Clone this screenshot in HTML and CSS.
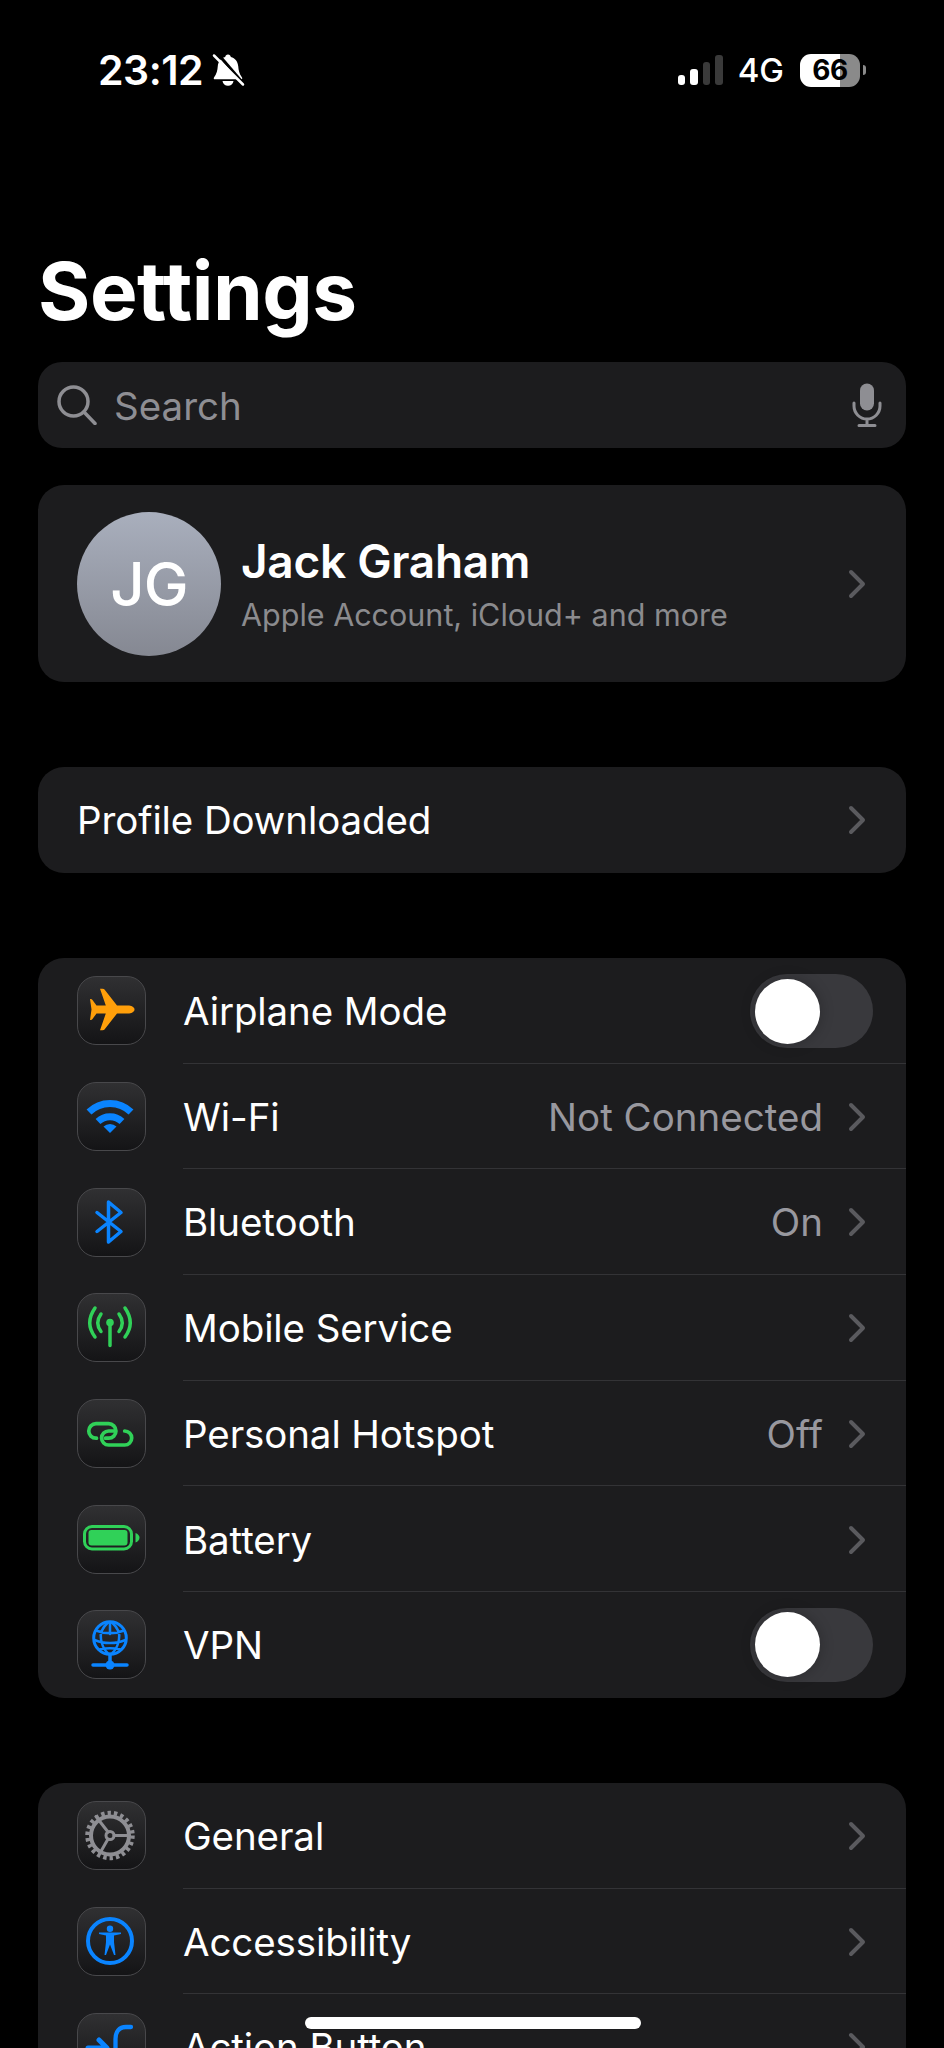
FILE: index.html
```html
<!DOCTYPE html>
<html lang="en">
<head>
<meta charset="utf-8">
<title>Settings</title>
<link rel="stylesheet" href="styles.css">
</head>
<body>
<div class="screen">
  <header class="status">
    <div class="status-left">
      <span class="time">23:12</span>
      <svg class="bell" viewBox="0 0 34 34">
        <path class="bell-fill" d="M17 1.5c1.6 0 2.6 1 2.8 2.4 4.4 1 7 4.600 7.400 9.100.4 4.500 1 7.500 3.800 11.500.6 1 .2 1.800-1 1.800H4c-1.200 0-1.600-.8-1-1.800 2.800-4 3.400-7 3.800-11.500.4-4.500 3-8.100 7.400-9.100.2-1.400 1.200-2.400 2.800-2.400z"/>
        <path class="bell-fill" d="M11.500 28h11c-.4 3-2.600 4.800-5.500 4.800s-5.100-1.800-5.500-4.800z"/>
        <path class="bell-gap" d="M7 1l24 28"/>
        <path class="bell-slash" d="M3 2.500l29 29"/>
      </svg>
    </div>
    <div class="status-right">
      <div class="signal">
        <i class="bar bar-1"></i><i class="bar bar-2"></i><i class="bar bar-3"></i><i class="bar bar-4"></i>
      </div>
      <span class="net">4G</span>
      <div class="battery"><span class="battery-level">66</span></div>
      <i class="battery-cap"></i>
    </div>
  </header>

  <main class="content">
    <h1 class="title">Settings</h1>

    <div class="search">
      <svg class="search-icon" viewBox="0 0 40 40">
        <circle cx="16.500" cy="16.500" r="14.500"/>
        <path d="M27 27l11 11.500"/>
      </svg>
      <span class="search-text">Search</span>
      <svg class="mic-icon" viewBox="0 0 30 44">
        <rect class="mic-body" x="8" y="0.500" width="14" height="27" rx="7"/>
        <path class="mic-line" d="M2 20v3a13 13 0 0 0 26 0v-3M15 36v6M7 42.500h16"/>
      </svg>
    </div>

    <section class="card profile">
      <div class="avatar">JG</div>
      <div class="profile-text">
        <div class="name">Jack Graham</div>
        <div class="sub">Apple Account, iCloud+ and more</div>
      </div>
      <svg class="chev" viewBox="0 0 18 30"><path d="M3 3l12 12L3 27"/></svg>
    </section>

    <section class="card plain-row">
      <span class="label">Profile Downloaded</span>
      <svg class="chev" viewBox="0 0 18 30"><path d="M3 3l12 12L3 27"/></svg>
    </section>

    <section class="card">
      <div class="row">
        <div class="icon">
          <svg viewBox="0 0 69 69"><path class="f-orange" d="M58.500 33.500C58.500 36 55 37.500 52 37.500H41L28.500 53.500Q28 54.200 26.500 54.200H24L29.800 37.500H20.500L16.500 43Q16 44 14.500 44H14L15.500 33.500 14 23H14.500Q16 23 16.500 24L20.500 29.500H29.800L24 12.800H26.500Q28 12.800 28.500 13.500L41 29.500H52C55 29.500 58.500 31 58.500 33.500Z"/></svg>
        </div>
        <div class="row-body">
          <span class="label">Airplane Mode</span>
          <div class="toggle"><i class="knob"></i></div>
        </div>
      </div>
      <div class="row">
        <div class="icon">
          <svg viewBox="0 0 69 69">
            <path class="s-blue s-wifi" d="M13 30A30 30 0 0 1 55 30"/>
            <path class="s-blue s-wifi" d="M22 39.500A17.500 17.500 0 0 1 46 39.500"/>
            <path class="f-blue j-round" d="M34 51L27.500 44.500A9.500 9.500 0 0 1 40.500 44.500Z"/>
          </svg>
        </div>
        <div class="row-body">
          <span class="label">Wi-Fi</span>
          <span class="value">Not Connected</span>
          <svg class="chev" viewBox="0 0 18 30"><path d="M3 3l12 12L3 27"/></svg>
        </div>
      </div>
      <div class="row">
        <div class="icon">
          <svg viewBox="0 0 69 69"><path class="s-blue s-35 j-round" d="M21 25.500L45 44.500 32.500 55V15L45 25.500 21 44.500"/></svg>
        </div>
        <div class="row-body">
          <span class="label">Bluetooth</span>
          <span class="value">On</span>
          <svg class="chev" viewBox="0 0 18 30"><path d="M3 3l12 12L3 27"/></svg>
        </div>
      </div>
      <div class="row">
        <div class="icon">
          <svg viewBox="0 0 69 69">
            <path class="s-green s-35" d="M19 15Q8.500 30 19 44M25 21Q18.500 30 25 38.500M43 21Q49.500 30 43 38.500M49 15Q59.500 30 49 44M34 30V52.500"/>
            <circle class="f-green" cx="34" cy="29.500" r="3.800"/>
          </svg>
        </div>
        <div class="row-body">
          <span class="label">Mobile Service</span>
          <svg class="chev" viewBox="0 0 18 30"><path d="M3 3l12 12L3 27"/></svg>
        </div>
      </div>
      <div class="row">
        <div class="icon">
          <svg viewBox="0 0 69 69">
            <path class="s-green s-37" d="M20.500 39.200H20A7.250 7.250 0 0 1 20 24.700H32.700A7.250 7.250 0 0 1 32.700 39.200H29.500"/>
            <path class="s-green s-37" d="M48.700 32A7 7 0 0 1 48.700 46H32.600A7 7 0 0 1 32.600 32H38"/>
          </svg>
        </div>
        <div class="row-body">
          <span class="label">Personal Hotspot</span>
          <span class="value">Off</span>
          <svg class="chev" viewBox="0 0 18 30"><path d="M3 3l12 12L3 27"/></svg>
        </div>
      </div>
      <div class="row">
        <div class="icon">
          <svg viewBox="0 0 69 69">
            <rect class="s-green s-3" x="8.500" y="22.500" width="47" height="22.500" rx="7.500"/>
            <rect class="f-green" x="12.500" y="26" width="39" height="15.500" rx="3"/>
            <path class="f-green" d="M59.500 29c2.500 1 4 2.700 4 4.700s-1.500 3.800-4 4.800z"/>
          </svg>
        </div>
        <div class="row-body">
          <span class="label">Battery</span>
          <svg class="chev" viewBox="0 0 18 30"><path d="M3 3l12 12L3 27"/></svg>
        </div>
      </div>
      <div class="row">
        <div class="icon">
          <svg viewBox="0 0 69 69">
            <circle class="s-blue s-3" cx="34" cy="28" r="16.300"/>
            <path class="s-blue s-25" d="M32 12.500C26 18 24 24 25 29c.5 5 3 10.500 7 14.500M36 12.500C42 18 44 24 43 29c-.5 5-3 10.500-7 14.500M34 12.500V24M20 20.500c8 3.500 20 3.500 28 0M18.500 30c9 4 22 4 31 0M23.500 39.500c6-1.500 15-1.500 21 0"/>
            <path class="s-blue s-35" d="M34 44V55M17 55H51"/>
            <circle class="f-blue" cx="34" cy="55" r="4.500"/>
          </svg>
        </div>
        <div class="row-body">
          <span class="label">VPN</span>
          <div class="toggle"><i class="knob"></i></div>
        </div>
      </div>
    </section>

    <section class="card">
      <div class="row">
        <div class="icon">
          <svg viewBox="0 0 69 69">
            <circle class="s-gray s-ring" cx="34" cy="34.500" r="19"/>
            <circle class="s-gray s-teeth" cx="34" cy="34.500" r="22.500"/>
            <circle class="s-gray s-3" cx="34" cy="34.500" r="4"/>
            <path class="s-gray s-3" d="M38 34.500H53M32 31L20 15.500M32 38L24 52"/>
          </svg>
        </div>
        <div class="row-body">
          <span class="label">General</span>
          <svg class="chev" viewBox="0 0 18 30"><path d="M3 3l12 12L3 27"/></svg>
        </div>
      </div>
      <div class="row">
        <div class="icon">
          <svg viewBox="0 0 69 69">
            <circle class="s-blue s-4" cx="34" cy="35" r="22"/>
            <circle class="f-blue" cx="34" cy="22.800" r="3.200"/>
            <path class="f-blue j-round" d="M23 26.500H45V28L38 29.500V36L39.500 49H38L34 38.500 30 49H28.500L30 36V29.500L23 28Z"/>
          </svg>
        </div>
        <div class="row-body">
          <span class="label">Accessibility</span>
          <svg class="chev" viewBox="0 0 18 30"><path d="M3 3l12 12L3 27"/></svg>
        </div>
      </div>
      <div class="row">
        <div class="icon">
          <svg viewBox="0 0 69 69">
            <path class="s-blue s-43" d="M55 15H50C43 15 39.500 20 39.500 27V50"/>
            <path class="s-blue s-5" d="M12 36H29M23 28L31 36 23 44"/>
          </svg>
        </div>
        <div class="row-body">
          <span class="label">Action Button</span>
          <svg class="chev" viewBox="0 0 18 30"><path d="M3 3l12 12L3 27"/></svg>
        </div>
      </div>
    </section>
  </main>

  <div class="home-bar"></div>
</div>
</body>
</html>
```
FILE: styles.css
```css
* { box-sizing: border-box; }
html, body { margin: 0; padding: 0; background: #000; }
body { font-family: Inter, "Liberation Sans", sans-serif; color: #fff; }

.screen { position: relative; width: 944px; height: 2048px; overflow: hidden; background: #000; }

/* status bar */
.status { display: flex; justify-content: space-between; align-items: center; height: 32px; margin-top: 54px; padding: 0 78px 0 98px; }
.status-left, .status-right { display: flex; align-items: center; }
.time { font-size: 41px; font-weight: 600; letter-spacing: -0.5px; line-height: 32px; }
.bell { width: 34px; height: 34px; margin-left: 8px; }
.bell-fill { fill: #fff; }
.bell-gap { stroke: #000; stroke-width: 3; fill: none; }
.bell-slash { stroke: #fff; stroke-width: 2.500; stroke-linecap: round; fill: none; }
.signal { display: flex; align-items: flex-end; gap: 5px; height: 30px; }
.bar { display: block; width: 7.500px; border-radius: 3px; background: #3a3a3a; }
.bar-1 { height: 10.500px; background: #fff; }
.bar-2 { height: 16px; background: #fff; }
.bar-3 { height: 23px; }
.bar-4 { height: 30px; }
.net { margin-left: 15px; font-size: 33px; font-weight: 500; line-height: 32px; }
.battery { display: flex; align-items: center; justify-content: center; width: 60px; height: 33px; margin-left: 16px; border-radius: 11px; background: linear-gradient(90deg, #fff 0, #fff 67%, #8a8a8a 67%); }
.battery-level { color: #000; font-size: 28px; font-weight: 700; line-height: 33px; letter-spacing: -0.5px; }
.battery-cap { display: block; width: 3px; height: 10px; margin-left: 3px; border-radius: 0 3px 3px 0; background: #8a8a8a; }

/* content */
.content { padding: 0 38px; }
.title { margin: 160px 0 0; font-size: 80px; font-weight: 700; line-height: 90px; letter-spacing: -0.5px; }
.search { display: flex; align-items: center; height: 86px; margin-top: 26px; padding: 0 15px 0 19px; border-radius: 24px; background: #1c1c1e; color: #8e8e93; }
.search-icon { width: 40px; height: 40px; fill: none; stroke: #8e8e93; stroke-width: 3.500; stroke-linecap: round; }
.search-text { margin-left: 17px; padding-top: 2px; font-size: 38.500px; flex: 1; }
.mic-icon { width: 30px; height: 44px; margin-right: 9px; }
.mic-body { fill: #8e8e93; }
.mic-line { fill: none; stroke: #8e8e93; stroke-width: 3; stroke-linecap: round; }

.card { margin-top: 85px; border-radius: 26px; background: #1c1c1e; }

.profile { display: flex; align-items: center; height: 197px; margin-top: 37px; padding: 0 40px 0 39px; }
.avatar { display: flex; align-items: center; justify-content: center; width: 144px; height: 144px; border-radius: 50%; background: linear-gradient(180deg, #a9afbd, #858892); font-size: 60px; font-weight: 500; letter-spacing: -1px; }
.profile-text { flex: 1; margin-left: 20px; padding-top: 2px; }
.name { font-size: 46px; font-weight: 600; line-height: 54px; letter-spacing: -0.3px; }
.sub { margin-top: 7px; font-size: 30.500px; line-height: 40px; color: #8b8b8e; }

.plain-row { display: flex; align-items: center; justify-content: space-between; height: 106px; padding: 0 40px 0 39px; }

.chev { display: block; flex: none; width: 18px; height: 30px; fill: none; stroke: #5a5a5e; stroke-width: 4; stroke-linecap: round; stroke-linejoin: round; }

.row { display: flex; height: 105.700px; padding-left: 38.500px; }
.icon { flex: none; align-self: center; width: 69px; height: 69px; margin-right: 37.500px; border: 1.500px solid #48484b; border-radius: 19px; background: linear-gradient(180deg, #303032, #141416); overflow: hidden; }
.icon svg { display: block; width: 69px; height: 69px; margin: -1.500px; }
.row-body { flex: 1; display: flex; align-items: center; padding: 1.500px 40px 0 0; border-bottom: 1.500px solid #333336; }
.row:last-child .row-body { border-bottom: 0; padding-top: 0; }
.label { flex: 1; font-size: 38.500px; line-height: 46px; letter-spacing: -0.1px; }
.value { margin-right: 25px; font-size: 38.500px; line-height: 46px; color: #98989f; }

.toggle { display: flex; align-items: center; width: 123px; height: 74px; margin-right: -7px; padding-left: 5px; border-radius: 37px; background: #39393d; }
.knob { display: block; width: 65px; height: 65px; border-radius: 50%; background: #fff; box-shadow: 0 0 14px rgba(0,0,0,.25); }

/* icon paint */
.f-orange { fill: #ff9f0a; }
.f-blue { fill: #0a84ff; }
.f-green { fill: #30d158; }
.j-round { stroke-linejoin: round; }
.s-blue, .s-green, .s-gray { fill: none; stroke-linecap: round; stroke-linejoin: round; }
.s-blue { stroke: #0a84ff; }
.s-green { stroke: #30d158; }
.s-gray { stroke: #8e8e93; }
.s-25 { stroke-width: 2.500; }
.s-3 { stroke-width: 3; }
.s-35 { stroke-width: 3.500; }
.s-37 { stroke-width: 3.700; }
.s-4 { stroke-width: 4; }
.s-43 { stroke-width: 4.300; }
.s-5 { stroke-width: 5; }
.s-wifi { stroke-width: 7; stroke-linecap: butt; }
.s-ring { stroke-width: 4; }
.s-teeth { stroke-width: 4.500; stroke-dasharray: 3.400 3.030; stroke-linecap: butt; }

.home-bar { position: absolute; left: 305px; top: 2017px; width: 336px; height: 12px; border-radius: 6px; background: #fff; }
```
